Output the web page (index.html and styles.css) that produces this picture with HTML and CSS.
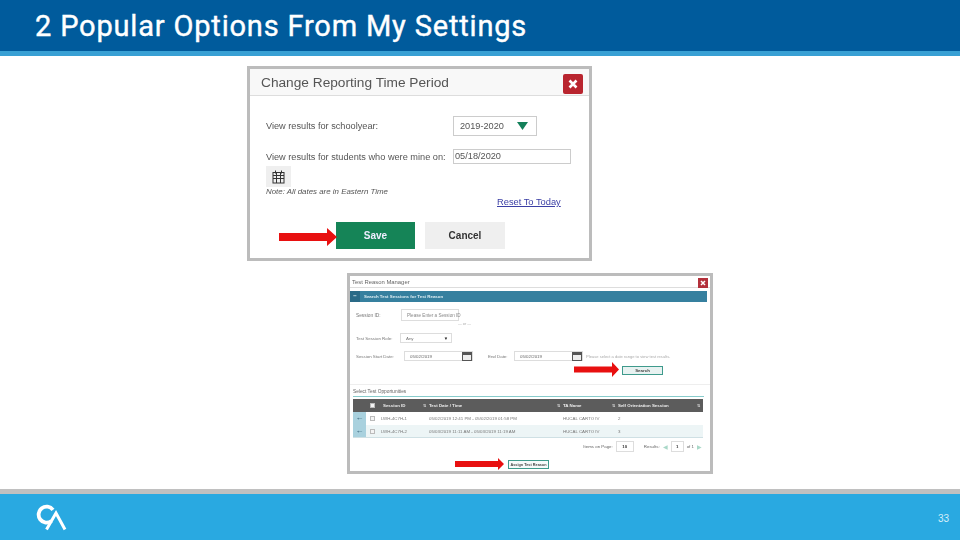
FILE: index.html
```html
<!DOCTYPE html>
<html lang="en">
<head>
<meta charset="utf-8">
<title>2 Popular Options From My Settings</title>
<link rel="stylesheet" href="styles.css">
</head>
<body>
<div class="slide">
  <header class="head"><h1>2 Popular Options From My Settings</h1></header>
  <main class="stage">
    <section class="shot period">
      <div class="p-title"><span class="p-name">Change Reporting Time Period</span>
        <span class="p-close"><svg width="10" height="10" viewBox="0 0 10 10"><path d="M1.500 1.500l7 7M8.500 1.500l-7 7" stroke="#fff" stroke-width="2.600"/></svg></span>
      </div>
      <div class="p-body">
        <div class="p-row one"><span>View results for schoolyear:</span>
          <span class="p-select">2019-2020<svg width="11" height="8" viewBox="0 0 11 8"><path d="M0 0h11L5.500 8z" fill="#13805a"/></svg></span></div>
        <div class="p-row two"><span>View results for students who were mine on:</span><span class="p-input">05/18/2020</span></div>
        <span class="p-cal"><svg width="13" height="14" viewBox="0 0 13 14" fill="none" stroke="#333" stroke-width="1"><rect x="1" y="2.500" width="11" height="10.500"/><path d="M1 5.500h11M1 8.500h11M4.500 2.500V13M8.500 2.500V13M3.500 0.500v3M9.500 0.500v3"/></svg></span>
        <p class="p-note">Note: All dates are in Eastern Time</p>
        <a class="p-reset">Reset To Today</a>
        <div class="p-actions"><span class="btn-save">Save</span><span class="btn-cancel">Cancel</span></div>
      </div>
      <svg class="arrow a1" width="58" height="18" viewBox="0 0 58 18"><path d="M0 5h48V0l10 9-10 9v-5H0z" fill="#e81010"/></svg>
    </section>

    <section class="shot manager">
      <div class="m-title"><span>Test Reason Manager</span><span class="m-close"><svg width="6" height="6" viewBox="0 0 6 6"><path d="M1 1l4 4M5 1L1 5" stroke="#fff" stroke-width="1.500"/></svg></span></div>
      <div class="m-bar"><span class="m-minus">&minus;</span><span>Search Test Sessions for Test Reason</span></div>
      <div class="m-form">
        <div class="m-f1"><span>Session ID:</span><span class="m-box wide">Please Enter a Session ID</span></div>
        <div class="m-or">&mdash; or &mdash;</div>
        <div class="m-f2"><span>Test Session Role:</span><span class="m-box role">Any<i>&#9660;</i></span></div>
        <div class="m-f3"><span>Session Start Date:</span>
          <span class="m-box date">05/02/2019<span class="m-ico"></span></span>
          <span class="m-end">End Date:</span>
          <span class="m-box date">05/02/2019<span class="m-ico"></span></span>
          <span class="m-hint">Please select a date range to view test results.</span></div>
        <div class="m-search"><span class="m-btn">Search</span></div>
      </div>
      <div class="m-sel">Select Test Opportunities</div>
      <div class="m-table">
        <div class="m-tr m-th"><span></span><span class="m-chk"></span><span class="m-c">Session ID<b>&#8645;</b></span><span class="m-c">Test Date / Time<b>&#8645;</b></span><span class="m-c">TA Name<b>&#8645;</b></span><span class="m-c">Self Orientation Session<b>&#8645;</b></span></div>
        <div class="m-tr"><span class="m-go">&#8592;</span><span class="m-chk"></span><span class="m-id">LWH-4C7H-1</span><span>05/02/2019 12:41 PM - 05/02/2019 01:58 PM</span><span>HUCAL CARTO IV</span><span>2</span></div>
        <div class="m-tr alt"><span class="m-go">&#8592;</span><span class="m-chk"></span><span class="m-id">LWH-4C7H-2</span><span>05/03/2019 11:11 AM - 05/03/2019 11:19 AM</span><span>HUCAL CARTO IV</span><span>3</span></div>
      </div>
      <div class="m-pager"><span>Items on Page:</span><span class="m-pg wide2">10</span><span class="m-res">Results:</span><span class="m-tri">&#9664;</span><span class="m-pg">1</span><span>of 1</span><span class="m-tri">&#9654;</span></div>
      <div class="m-assign"><span class="m-btn">Assign Test Reason</span></div>
      <svg class="arrow a2" width="45" height="15" viewBox="0 0 45 15"><path d="M0 4.500h38V0l7 7.500-7 7.500v-4.500H0z" fill="#e81010"/></svg>
      <svg class="arrow a3" width="49" height="12" viewBox="0 0 49 12"><path d="M0 3h43V0l6 6-6 6V9H0z" fill="#e81010"/></svg>
    </section>
  </main>
  <footer class="foot">
    <svg class="logo" width="32" height="27" viewBox="0 0 32 27" fill="none" stroke="#fff"><path d="M18 5.800A8 8 0 1 0 16.500 17" stroke-width="3.800"/><path d="M11.500 25.500L21 9l9 16.500" stroke-width="3"/></svg>
    <span class="num">33</span>
  </footer>
</div>
</body>
</html>
```
FILE: styles.css
```css
* { box-sizing: border-box; }
html, body { margin: 0; padding: 0; }
body { width: 960px; height: 540px; overflow: hidden; background: #fff; font-family: "Liberation Sans", Arial, sans-serif; }
.slide { width: 960px; height: 540px; display: flex; flex-direction: column; }

.head { height: 56px; flex: none; background: #005b9c; border-bottom: 5px solid #38a0d4; padding: 10px 0 0 35px; }
.head h1 { margin: 0; font: 400 29px/32px "Roboto", "Liberation Sans", sans-serif; color: #fff; letter-spacing: .82px; -webkit-text-stroke: .4px #fff; white-space: nowrap; }

.stage { flex: 1; position: relative; }
.shot { position: absolute; background: #fff; border: 3px solid #bcbcbc; }

.period { left: 247px; top: 10px; width: 345px; height: 195px; color: #555; filter: blur(.4px); }
.p-title { height: 27px; background: #f8f8f8; border-bottom: 1px solid #ddd; display: flex; justify-content: space-between; align-items: flex-start; padding: 5px 6px 0 11px; font-size: 13.700px; line-height: 16px; color: #555; }
.p-name { margin-top: 1px; }
.p-close { width: 20px; height: 20px; background: #b9252f; border-radius: 2px; display: flex; align-items: center; justify-content: center; }
.p-body { padding: 20px 0 0 16px; font-size: 9.200px; }
.p-row { display: flex; align-items: center; }
.p-row > span:first-child { width: 187px; white-space: nowrap; }
.p-row.one { height: 20px; }
.p-row.two { height: 15px; margin-top: 13px; }
.p-select { width: 84px; height: 20px; border: 1px solid #ccc; display: flex; align-items: center; justify-content: space-between; padding: 0 8px 0 6px; font-size: 9.200px; }
.p-input { width: 118px; height: 15px; border: 1px solid #ccc; padding-left: 1px; line-height: 13px; font-size: 9.200px; }
.p-cal { width: 25px; height: 21px; margin-top: 2px; background: #efefef; display: flex; align-items: center; justify-content: center; }
.p-note { margin: 0; font-size: 7.900px; font-style: italic; line-height: 10px; }
.p-reset { display: block; margin: 0 0 0 231px; width: 70px; font-size: 9.300px; line-height: 11px; color: #3b3fa5; text-decoration: underline; white-space: nowrap; }
.p-actions { display: flex; gap: 10px; margin: 14px 0 0 70px; }
.btn-save, .btn-cancel { width: 79px; height: 27px; display: flex; align-items: center; justify-content: center; font-size: 10px; font-weight: 700; }
.btn-save { background: #158457; color: #eef; }
.btn-cancel { width: 80px; background: #efefef; color: #333; }
.arrow { position: absolute; display: block; }
.a1 { left: 29px; top: 159px; }

.manager { left: 347px; top: 217px; width: 366px; height: 201px; color: #777; font-size: 4.400px; filter: blur(.45px); }
.m-title { height: 12px; border-bottom: 1px solid #ddd; padding: 0 2px; display: flex; justify-content: space-between; align-items: center; font-size: 5.900px; color: #666; white-space: nowrap; }
.m-close { width: 10px; height: 10px; margin-top: 2px; background: #b3303b; display: flex; align-items: center; justify-content: center; }
.m-bar { margin: 3px 3px 0 0; height: 11px; background: #36809f; color: #dfeef3; display: flex; align-items: center; font-weight: 700; gap: 4px; }
.m-minus { width: 10px; height: 11px; background: #2a6a87; text-align: center; line-height: 11px; font-size: 6px; }
.m-form { height: 83px; padding: 7px 0 0 6px; border-bottom: 1px solid #eee; white-space: nowrap; }
.m-box { border: 1px solid #ddd; display: inline-flex; align-items: center; padding-left: 5px; }
.m-f1, .m-f2 { display: flex; align-items: center; }
.m-f1 span:first-child { width: 45px; font-size: 4.800px; }
.m-f2 span:first-child { width: 44px; }
.m-box.wide { width: 58px; height: 12px; font-size: 4.600px; color: #888; }
.m-or { margin-left: 102px; height: 5px; line-height: 7px; color: #aaa; font-size: 3.800px; }
.m-f2 { margin-top: 7px; }
.m-box.role { width: 52px; height: 10px; justify-content: space-between; padding-right: 3px; }
.m-box.role i { font-style: normal; color: #222; }
.m-f3 { display: flex; align-items: center; margin-top: 8px; }
.m-f3 > span:first-child { width: 48px; }
.m-box.date { width: 69px; height: 10px; color: #666; justify-content: space-between; }
.m-ico { width: 10px; height: 9px; border: 1.500px solid #555; border-top-width: 3px; background: #eee; }
.m-end { margin-left: 15px; width: 26px; }
.m-hint { margin-left: 3px; color: #aaa; font-size: 4.100px; }
.m-search { display: flex; justify-content: flex-end; margin: 5px 47px 0 0; }
.m-btn { border: 1px solid #3e9a8c; background: #e8f2f1; color: #444; display: flex; align-items: center; justify-content: center; font-weight: 700; }
.m-search .m-btn { width: 41px; height: 9px; }
.m-sel { margin-left: 3px; width: 351px; height: 12px; line-height: 7px; border-bottom: 1px solid #8cc; font-size: 4.800px; color: #666; padding-top: 3px; }
.m-table { margin: 2px 0 0 3px; width: 350px; border-bottom: 1px solid #cfe0e4; }
.m-tr { display: grid; grid-template-columns: 13px 17px 46px 134px 55px 85px; height: 13px; align-items: center; white-space: nowrap; }
.m-tr.alt { background: #edf5f6; height: 12px; }
.m-th { background: #5c5c5c; color: #eee; font-weight: 700; }
.m-c { display: flex; justify-content: space-between; padding-right: 3px; }
.m-c b { color: #ccc; }
.m-id { margin-left: -2px; }
.m-go { height: 100%; background: #a9d1de; color: #24506a; font-size: 8px; line-height: 11px; text-align: center; font-weight: 700; }
.m-chk { width: 5px; height: 5px; margin-left: 4px; border: 1px solid #bbb; background: #f4f4f4; }
.m-pager { display: flex; align-items: center; justify-content: flex-end; gap: 3px; margin: 3px 8px 0 0; height: 11px; color: #666; }
.m-pg { width: 13px; height: 11px; border: 1px solid #ddd; display: flex; align-items: center; justify-content: center; font-weight: 700; color: #333; }
.m-pg.wide2 { width: 18px; }
.m-res { margin-left: 7px; }
.m-tri { color: #a9d8c8; font-size: 6px; }
.m-assign { margin: 8px 0 0 158px; }
.m-assign .m-btn { width: 41px; height: 9px; background: #f6fafa; font-size: 3.800px; white-space: nowrap; }
.a2 { left: 224px; top: 86px; }
.a3 { left: 105px; top: 182px; }

.foot { height: 51px; flex: none; background: #29a9e1; border-top: 5px solid #c0c0c0; display: flex; align-items: center; justify-content: space-between; padding: 0 11px 0 35px; }
.logo { display: block; margin-top: 1px; }
.num { font: 10px "Liberation Sans", sans-serif; color: #d5eef9; margin-top: 2px; }
```
